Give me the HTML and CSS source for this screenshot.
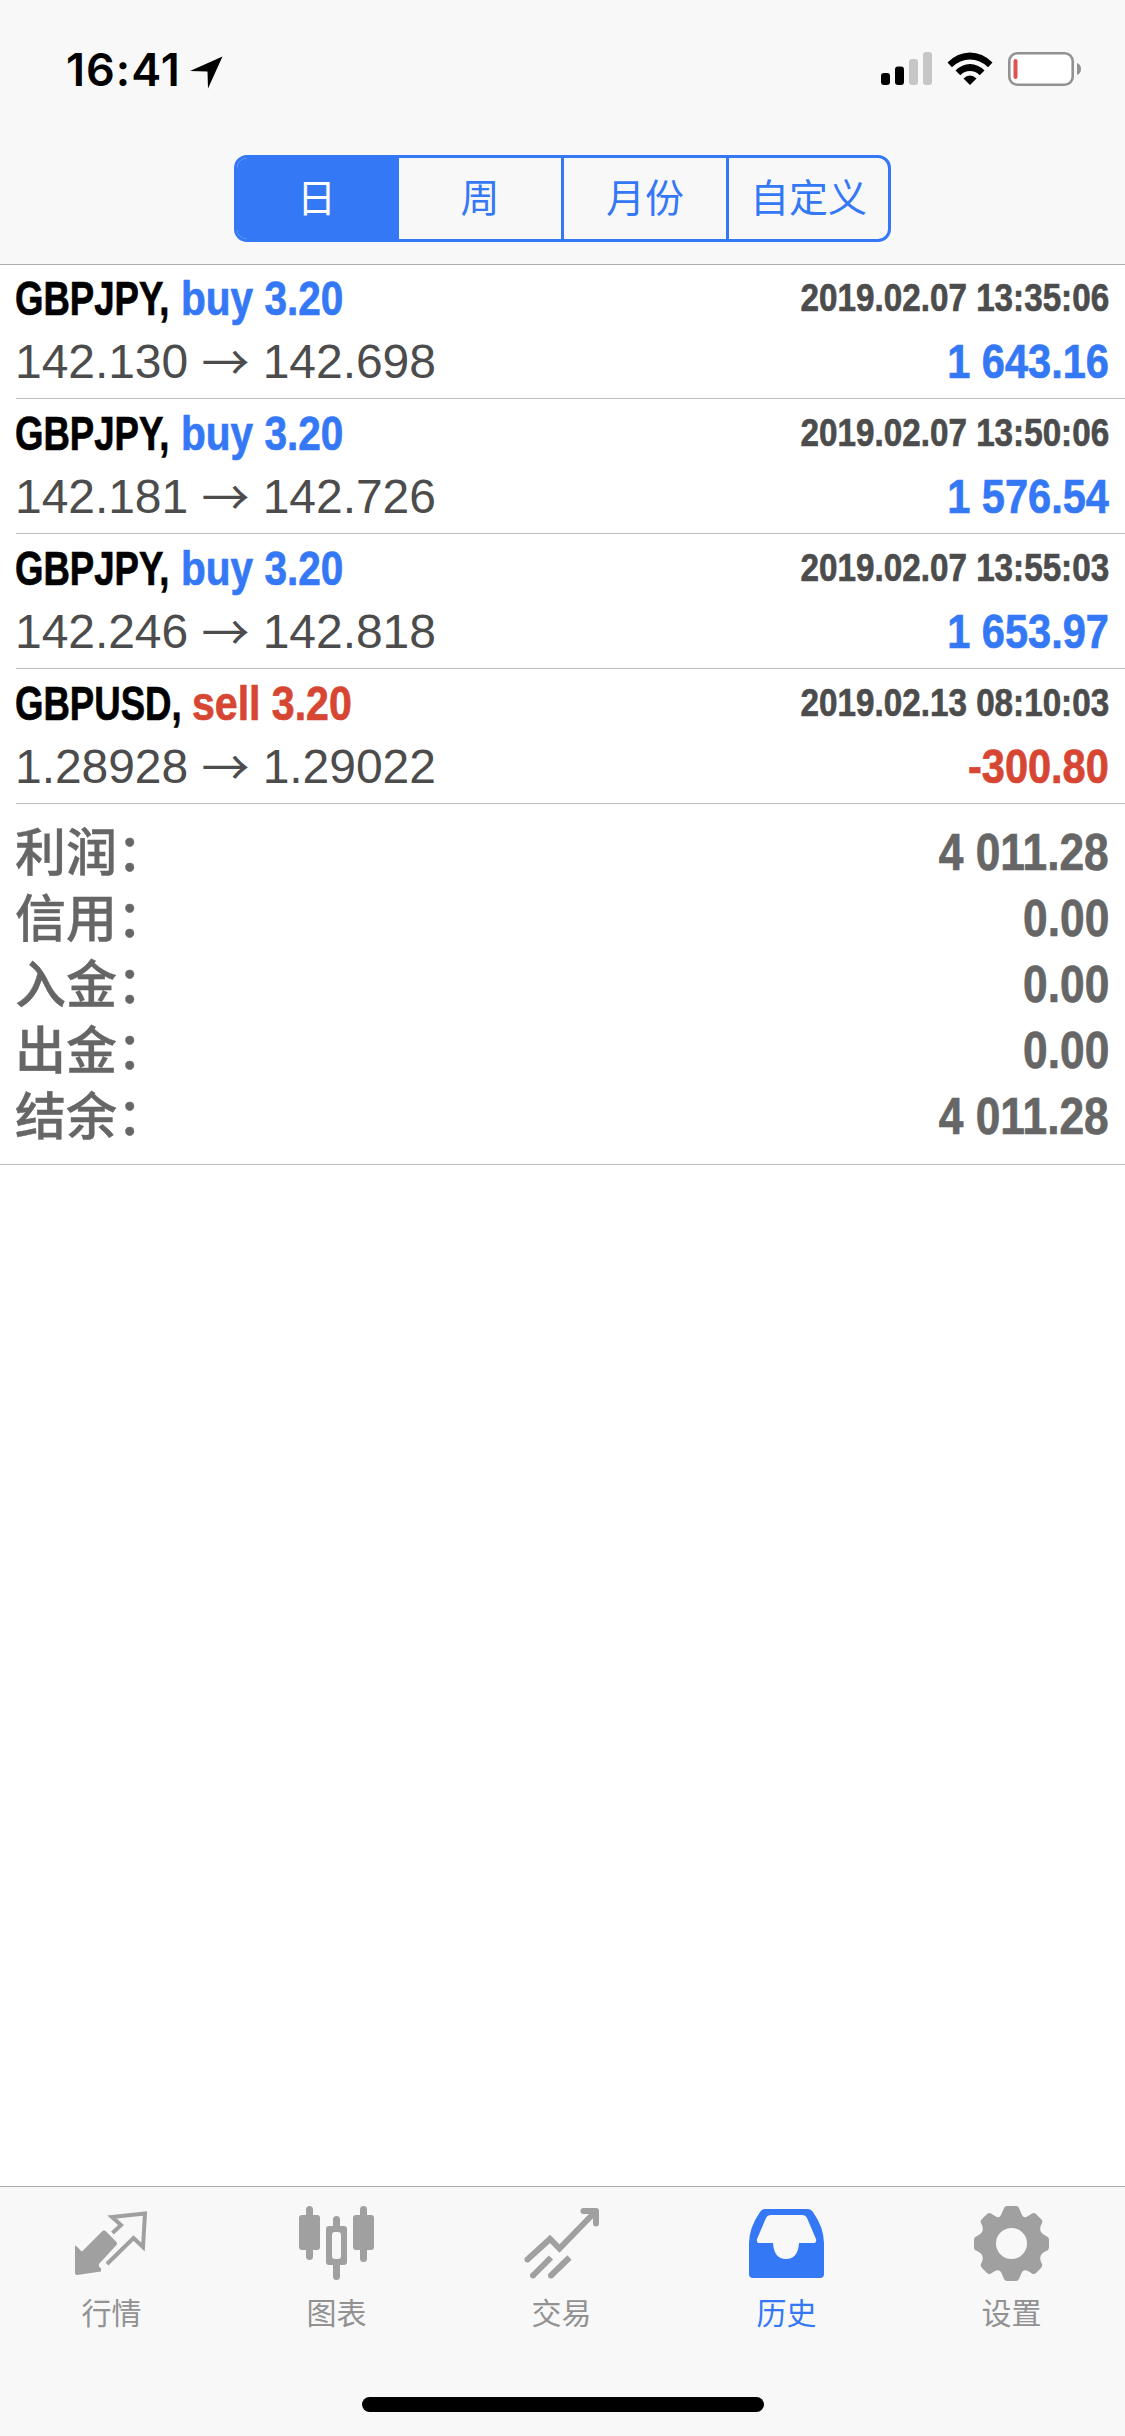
FILE: index.html
```html
<!DOCTYPE html>
<html lang="zh-CN">
<head>
<meta charset="utf-8">
<title>历史</title>
<link rel="stylesheet" href="styles.css">
</head>
<body>
<div class="app">
  <header class="top">
    <div class="status">
      <div class="clock">
        <span class="time">16:41</span>
        <svg class="loc" width="33" height="33" viewBox="0 0 33 33"><path d="M32.500 0.500L18 32.500L17.500 15.500L0 15Z"/></svg>
      </div>
      <div class="indicators">
        <svg width="51" height="33" viewBox="0 0 51 33"><rect y="21" width="9" height="12" rx="3"/><rect x="14" y="14.500" width="9" height="18.500" rx="3"/><g fill="#c6c6c6"><rect x="28" y="7" width="9" height="26" rx="3"/><rect x="42" y="0" width="9" height="33" rx="3"/></g></svg>
        <svg width="46" height="34" viewBox="0 0 46 34"><path d="M0.500 10.500Q10.500 0.500 23 0.500T45.500 10.500L41 15.200Q33 7.500 23 7.500T5 15.200Z"/><path d="M8.500 18.500Q15 12 23 12T37.500 18.500L32.700 23.200Q28.500 19 23 19T13.300 23.200Z"/><path d="M16.500 26.500Q19.500 23.500 23 23.500T29.500 26.500L23 33Z"/></svg>
        <svg width="74" height="34" viewBox="0 0 74 34"><rect x="1.300" y="1.300" width="63.400" height="31.400" rx="8" fill="#fff" stroke="#929292" stroke-width="2.600"/><rect x="5.500" y="7" width="4" height="20" rx="2" fill="#e05252"/><path d="M69 11Q73 12.500 73 17T69 23Z" fill="#929292"/></svg>
      </div>
    </div>
    <nav class="segments">
      <div class="seg on">日</div>
      <div class="seg">周</div>
      <div class="seg">月份</div>
      <div class="seg">自定义</div>
    </nav>
  </header>

  <main class="content">
    <section class="deals">
      <article class="deal">
        <div class="line"><div class="name"><span class="sym">GBPJPY,</span><span class="op buy">buy 3.20</span></div><span class="date">2019.02.07 13:35:06</span></div>
        <div class="line"><span class="prices">142.130 <i class="arrow">→</i> 142.698</span><span class="profit buy">1 643.16</span></div>
      </article>
      <article class="deal">
        <div class="line"><div class="name"><span class="sym">GBPJPY,</span><span class="op buy">buy 3.20</span></div><span class="date">2019.02.07 13:50:06</span></div>
        <div class="line"><span class="prices">142.181 <i class="arrow">→</i> 142.726</span><span class="profit buy">1 576.54</span></div>
      </article>
      <article class="deal">
        <div class="line"><div class="name"><span class="sym">GBPJPY,</span><span class="op buy">buy 3.20</span></div><span class="date">2019.02.07 13:55:03</span></div>
        <div class="line"><span class="prices">142.246 <i class="arrow">→</i> 142.818</span><span class="profit buy">1 653.97</span></div>
      </article>
      <article class="deal">
        <div class="line"><div class="name usd"><span class="sym">GBPUSD,</span><span class="op sell">sell 3.20</span></div><span class="date">2019.02.13 08:10:03</span></div>
        <div class="line"><span class="prices">1.28928 <i class="arrow">→</i> 1.29022</span><span class="profit sell">-300.80</span></div>
      </article>
    </section>
    <section class="summary">
      <div class="total"><span class="label">利润：</span><span class="amount">4 011.28</span></div>
      <div class="total"><span class="label">信用：</span><span class="amount">0.00</span></div>
      <div class="total"><span class="label">入金：</span><span class="amount">0.00</span></div>
      <div class="total"><span class="label">出金：</span><span class="amount">0.00</span></div>
      <div class="total"><span class="label">结余：</span><span class="amount">4 011.28</span></div>
    </section>
  </main>

  <footer class="bottom">
    <nav class="tabs">
      <div class="tab"><svg class="icon" viewBox="0 0 75 75"><path d="M28 25.500Q30 23.500 32 25.500L42 35.500Q44 37.500 42 39.500L25 58Q24 60 27 62.500V65.500L3 69Q1 69 1 67V39.500Q3 40 7 45Q8 45.500 9 44.500Z"/><path d="M38.500 27L47 19L38 11L71 7.500L69 41L59.500 32L33 58" fill="none" stroke="#a0a0a0" stroke-width="4"/></svg><span>行情</span></div>
      <div class="tab"><svg class="icon" viewBox="0 0 75 75"><rect x="0" y="9" width="21" height="35" rx="3"/><rect x="7" y="0" width="7" height="54" rx="3.500"/><rect x="54" y="9" width="21" height="35" rx="3"/><rect x="61" y="0" width="7" height="56" rx="3.500"/><path fill-rule="evenodd" d="M30 20H45Q48 20 48 23V56Q48 59 45 59H30Q27 59 27 56V23Q27 20 30 20ZM36 26Q33 26 33 29V50Q33 53 36 53H39Q42 53 42 50V29Q42 26 39 26Z"/><path d="M34 21V13.500A3.500 3.500 0 0 1 41 13.500V21ZM34 58V70.500A3.500 3.500 0 0 0 41 70.500V58Z"/></svg><span>图表</span></div>
      <div class="tab"><svg class="icon" viewBox="0 0 75 75"><g fill="none" stroke="#a0a0a0" stroke-width="6"><path d="M4.500 52.500L26 33L35.500 42.500L71 6"/><path d="M59.500 5H72V17.500" stroke-linejoin="round" stroke-linecap="round"/><path d="M9.500 69L27 51.500M27.500 69L45.500 51.500"/></g><circle cx="3.500" cy="53.500" r="3"/><circle cx="9" cy="69.500" r="3"/><circle cx="27" cy="69.500" r="3"/></svg><span>交易</span></div>
      <div class="tab on"><svg class="icon" viewBox="0 0 75 75"><path fill-rule="evenodd" d="M16 3H59Q62 3 64 6Q75 22 75 37V68Q75 72 71 72H4Q0 72 0 68V37Q0 22 11 6Q13 3 16 3ZM22 9Q18.500 9 17 12L8 33Q7 37 11 37H24Q25 53 37 53T50 37H64Q68 37 67 33L58 12Q56.500 9 53 9Z"/></svg><span>历史</span></div>
      <div class="tab"><svg class="icon" viewBox="0 0 75 75"><path fill-rule="evenodd" d="M33 0H42Q44 0 45 2L48 9Q50 13 54 10L58 7.500Q60 6.500 62 8L67 13Q69 15 68 17Q65 22 67 26Q68 28 72 30Q75 31 75 34V41Q75 44 72 45Q68 47 67 49Q65 53 68 58Q69 60 67 62L62 67Q60 69 58 67.500L54 65Q50 63 48 66L45 73Q44 75 42 75H33Q31 75 30 73L27 66Q25 63 21 65L17 67.500Q15 69 13 67L8 62Q6 60 7 58Q10 53 8 49Q7 47 3 45Q0 44 0 41V34Q0 31 3 30Q7 28 8 26Q10 22 7 17Q6 15 8 13L13 8Q15 6.500 17 7.500L21 10Q25 13 27 9L30 2Q31 0 33 0ZM37.500 22A15.500 15.500 0 1 0 37.500 53A15.500 15.500 0 1 0 37.500 22Z"/></svg><span>设置</span></div>
    </nav>
    <div class="home"></div>
  </footer>
</div>
</body>
</html>
```
FILE: styles.css
```css
* { box-sizing: border-box; }
body {
  margin: 0;
  background: #fff;
  font-family: "Liberation Sans", "Noto Sans CJK SC", sans-serif;
}
.app { display: flex; flex-direction: column; width: 1125px; height: 2436px; }

.top {
  display: flex; flex-direction: column; align-items: center;
  height: 265px; background: #f8f8f8; border-bottom: 1px solid #adadad;
}
.status {
  display: flex; justify-content: space-between; align-items: flex-start;
  width: 100%; height: 155px; padding: 52px 43px 0 66px;
}
.clock { display: flex; gap: 10px; }
.time {
  width: 114px; height: 34px;
  font: 600 45px/36px "Inter", sans-serif; letter-spacing: 1px; white-space: nowrap;
}
.loc { margin-top: 4px; }
.indicators { display: flex; gap: 15px; }

.segments {
  display: flex; width: 657px; height: 87px; overflow: hidden;
  border: 3px solid #3478f6; border-radius: 13px;
}
.seg {
  flex: none; width: 165px; text-align: center; color: #3478f6;
  font-size: 39px; line-height: 82px;
}
.seg + .seg { border-left: 3px solid #3478f6; }
.seg.on { width: 159px; background: #3478f6; color: #fff; }
.seg:last-child { width: 162px; }

.content { flex: 1; }
.deals { padding-left: 16px; }
.deal {
  height: 135px; padding: 3px 16px 0 0;
  border-bottom: 1px solid #bebebe;
}
.deal:first-child { height: 134px; padding-top: 2px; }
.line { display: flex; justify-content: space-between; height: 63px; line-height: 63px; }
.name, .date, .profit, .amount { font-weight: 700; white-space: nowrap; -webkit-text-stroke: .7px currentColor; }
.name { display: flex; margin-left: -1px; font-size: 48px; }
.sym { width: 166px; transform: scaleX(.762); transform-origin: left; }
.usd .sym { width: 177px; }
.op { transform: scaleX(.845); transform-origin: left; }
.usd .op { transform: scaleX(.855); }
.buy { color: #3478f6; }
.sell { color: #d74632; }
.date {
  color: #4c4c4c; font-size: 39px; line-height: 62px;
  transform: scaleX(.852); transform-origin: right;
}
.prices {
  margin-left: -1px; color: #4c4c4c; font-size: 48px; letter-spacing: -.05px; white-space: pre;
}
.arrow {
  font-family: "Noto Sans CJK SC", sans-serif; font-style: normal;
  line-height: 0; vertical-align: -2px;
}
.profit { font-size: 48px; transform: scaleX(.865); transform-origin: right; }

.summary { height: 361px; padding: 15px 16px 0; border-bottom: 1px solid #bebebe; }
.total { display: flex; justify-content: space-between; height: 66px; line-height: 67px; color: #666; }
.label {
  margin-left: -1px; font-family: "Noto Sans CJK SC", sans-serif;
  font-size: 51px; font-weight: 500; line-height: 60px;
  -webkit-text-stroke: .4px currentColor;
}
.amount { font-size: 51px; transform: scaleX(.868); transform-origin: right; }

.bottom {
  display: flex; flex-direction: column; justify-content: space-between; align-items: center;
  height: 250px; padding-bottom: 24px; background: #f8f8f8; border-top: 1px solid #adadad;
}
.tabs { display: flex; width: 100%; padding-top: 19px; }
.tab {
  display: flex; flex-direction: column; align-items: center; gap: 18px;
  width: 225px; padding-right: 2px; color: #929292; fill: #a0a0a0;
  font-size: 30px; line-height: 30px;
}
.tab.on { color: #3478f6; fill: #3478f6; }
.icon { width: 75px; height: 75px; }
.home { width: 402px; height: 15px; border-radius: 8px; background: #000; }
```
